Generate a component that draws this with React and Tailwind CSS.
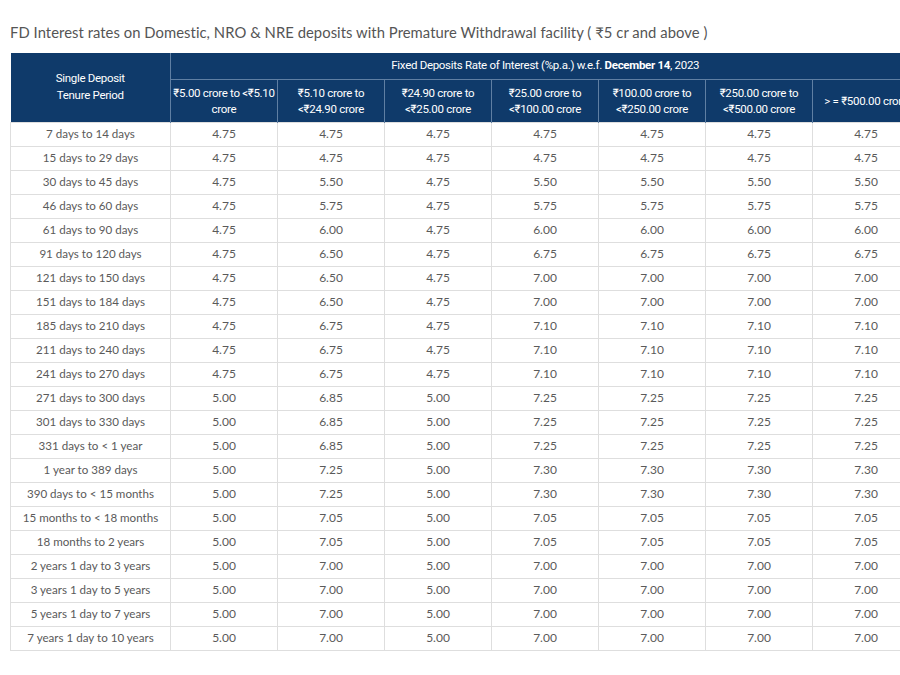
import React from 'react';

const tiers = [
  ['₹5.00 crore to <₹5.10', 'crore'],
  ['₹5.10 crore to', '<₹24.90 crore'],
  ['₹24.90 crore to', '<₹25.00 crore'],
  ['₹25.00 crore to', '<₹100.00 crore'],
  ['₹100.00 crore to', '<₹250.00 crore'],
  ['₹250.00 crore to', '<₹500.00 crore'],
  ['> = ₹500.00 crore'],
];

// [tenure, a, b, c, rest] – the last four tiers always share a rate
const rows = [
  ['7 days to 14 days', '4.75', '4.75', '4.75', '4.75'],
  ['15 days to 29 days', '4.75', '4.75', '4.75', '4.75'],
  ['30 days to 45 days', '4.75', '5.50', '4.75', '5.50'],
  ['46 days to 60 days', '4.75', '5.75', '4.75', '5.75'],
  ['61 days to 90 days', '4.75', '6.00', '4.75', '6.00'],
  ['91 days to 120 days', '4.75', '6.50', '4.75', '6.75'],
  ['121 days to 150 days', '4.75', '6.50', '4.75', '7.00'],
  ['151 days to 184 days', '4.75', '6.50', '4.75', '7.00'],
  ['185 days to 210 days', '4.75', '6.75', '4.75', '7.10'],
  ['211 days to 240 days', '4.75', '6.75', '4.75', '7.10'],
  ['241 days to 270 days', '4.75', '6.75', '4.75', '7.10'],
  ['271 days to 300 days', '5.00', '6.85', '5.00', '7.25'],
  ['301 days to 330 days', '5.00', '6.85', '5.00', '7.25'],
  ['331 days to < 1 year', '5.00', '6.85', '5.00', '7.25'],
  ['1 year to 389 days', '5.00', '7.25', '5.00', '7.30'],
  ['390 days to < 15 months', '5.00', '7.25', '5.00', '7.30'],
  ['15 months to < 18 months', '5.00', '7.05', '5.00', '7.05'],
  ['18 months to 2 years', '5.00', '7.05', '5.00', '7.05'],
  ['2 years 1 day to 3 years', '5.00', '7.00', '5.00', '7.00'],
  ['3 years 1 day to 5 years', '5.00', '7.00', '5.00', '7.00'],
  ['5 years 1 day to 7 years', '5.00', '7.00', '5.00', '7.00'],
  ['7 years 1 day to 10 years', '5.00', '7.00', '5.00', '7.00'],
];

export default function App() {
  return (
    <div className="w-[900px] h-[675px] overflow-hidden bg-white font-['Lato','Noto_Sans',sans-serif]">
      <div className="pl-[10px] pt-[22px]">
        <h1 className="text-[14.8px] leading-[20px] text-[#555] tracking-[0.05px] whitespace-nowrap">
          FD Interest rates on Domestic, NRO &amp; NRE deposits with Premature Withdrawal facility ( ₹5 cr and above )
        </h1>
        <table className="mt-[11px] border-collapse table-fixed w-[909px] text-center">
          <colgroup>
            <col className="w-[160px]" />
            {tiers.map((_, i) => (
              <col key={i} className="w-[107px]" />
            ))}
          </colgroup>
          <thead className="bg-[#0f3a6a] text-white font-['Roboto',sans-serif] text-[11.5px] tracking-[-0.3px]">
            <tr className="h-[26px]">
              <th rowSpan={2} className="font-normal leading-[17px] border-r border-[#5f7fa3] px-1">
                Single Deposit<br />Tenure Period
              </th>
              <th colSpan={7} className="font-normal border-b border-[#5f7fa3]">
                Fixed Deposits Rate of Interest (%p.a.) w.e.f. <b className="font-bold">December 14</b>, 2023
              </th>
            </tr>
            <tr className="h-[43px]">
              {tiers.map((t, i) => (
                <th key={i} className="font-normal leading-[16px] border-r border-[#5f7fa3] px-0.5 whitespace-nowrap">
                  {t[0]}
                  {t[1] && (
                    <>
                      <br />
                      {t[1]}
                    </>
                  )}
                </th>
              ))}
            </tr>
          </thead>
          <tbody className="text-[12px] text-[#5a5a5a]">
            {rows.map((r) => {
              const cells = [r[1], r[2], r[3], r[4], r[4], r[4], r[4]];
              return (
                <tr key={r[0]} className="h-[24px]">
                  <td className="border border-[#dedede] whitespace-nowrap text-[11.6px]">{r[0]}</td>
                  {cells.map((c, i) => (
                    <td key={i} className="border border-[#dedede]">{c}</td>
                  ))}
                </tr>
              );
            })}
          </tbody>
        </table>
      </div>
    </div>
  );
}
